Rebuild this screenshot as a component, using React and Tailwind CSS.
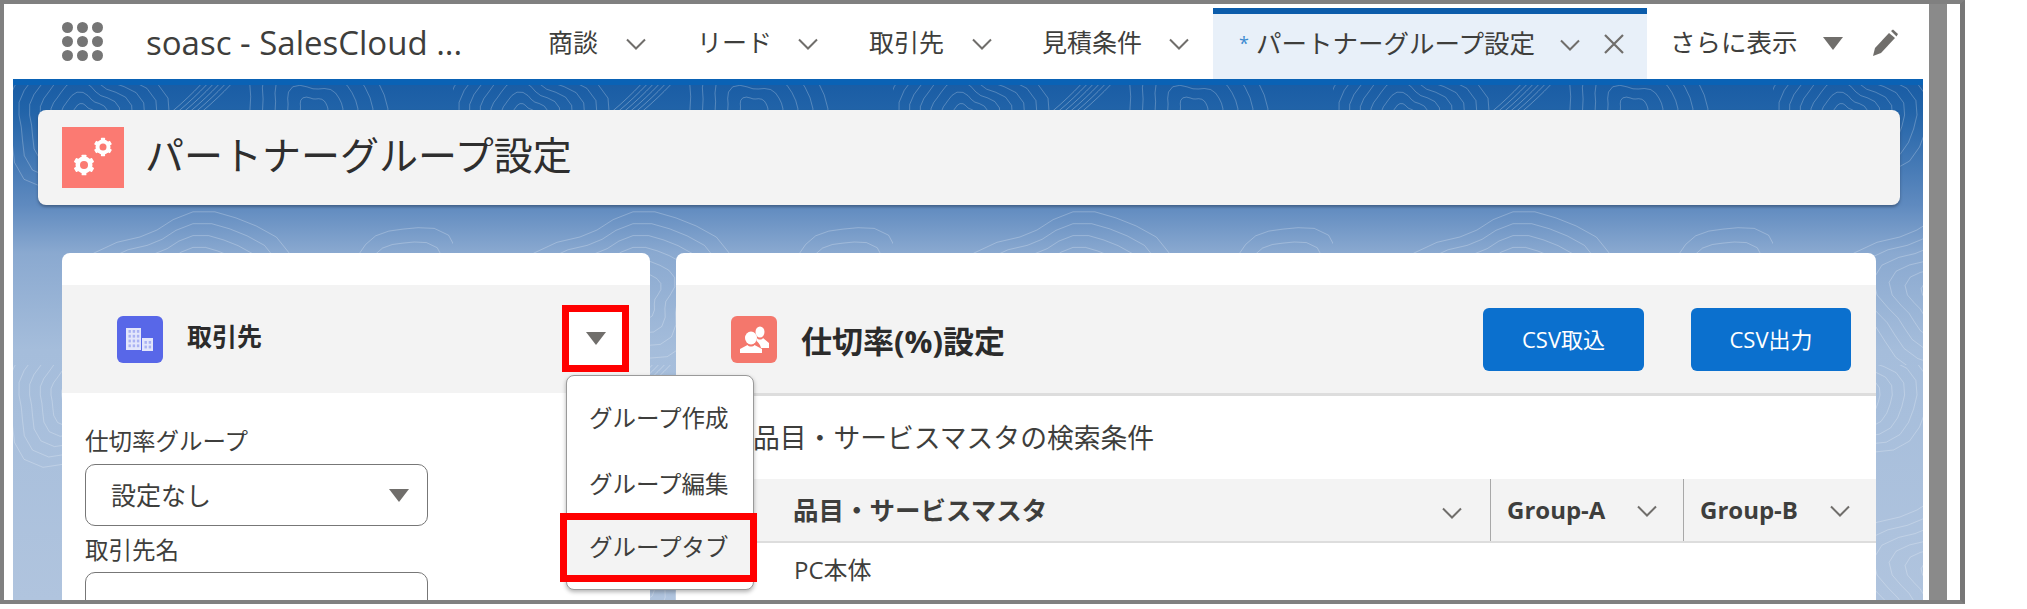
import { Fragment } from 'react'

// 共通アイコン
function Chevron({ className = '' }) {
  return (
    <svg width="22" height="14" viewBox="0 0 22 14" className={`shrink-0 ${className}`}>
      <path d="M2 2.5 L11 11.5 L20 2.5" fill="none" stroke="#706e6b" strokeWidth="2" />
    </svg>
  )
}

function Caret({ className = '' }) {
  return (
    <svg width="20" height="13" viewBox="0 0 20 13" className={`shrink-0 ${className}`}>
      <path d="M0 0 H20 L10 13 Z" fill="#706e6b" />
    </svg>
  )
}

function GridDots() {
  const dots = [0, 1, 2, 3, 4, 5, 6, 7, 8]
  return (
    <div className="grid grid-cols-3 gap-x-[4px] gap-y-[3px] w-[41px] shrink-0">
      {dots.map(d => <span key={d} className="w-[11px] h-[11px] rounded-full bg-[#757575]" />)}
    </div>
  )
}

function Gear({ x, y, r, hole }) {
  return (
    <g transform={`translate(${x} ${y})`}>
      {[0, 60, 120, 180, 240, 300].map(a => (
        <rect key={a} x={-r * 0.28} y={-r * 1.22} width={r * 0.56} height={r * 0.6} rx="0.6" fill="#fff" transform={`rotate(${a})`} />
      ))}
      <circle r={r} fill="#fff" />
      <circle r={hole} fill="#fb7a72" />
    </g>
  )
}

function GearsIcon() {
  return (
    <div className="w-[62px] h-[61px] bg-[#fb7a72] shrink-0 flex items-center justify-center">
      <svg width="62" height="61" viewBox="0 0 62 61">
        <Gear x={22} y={38} r={8.5} hole={4} />
        <Gear x={41} y={20} r={7.5} hole={3.5} />
      </svg>
    </div>
  )
}

function BuildingIcon() {
  const big = []
  for (let c = 0; c < 3; c++) for (let r = 0; r < 4; r++) big.push([11.5 + c * 4.2, 14 + r * 4.8])
  const small = []
  for (let c = 0; c < 2; c++) for (let r = 0; r < 2; r++) small.push([27.5 + c * 4.2, 25 + r * 4.6])
  return (
    <div className="w-[46px] h-[47px] rounded-[6px] bg-[#5867e8] shrink-0">
      <svg width="46" height="47" viewBox="0 0 46 47">
        <path d="M9 12 H24 V34 H9 Z M25 22 H36 V35 H25 Z" fill="#e3e6fb" />
        {big.map(([x, y]) => <rect key={`${x}-${y}`} x={x} y={y} width="2.4" height="2.8" fill="#aab2f3" />)}
        {small.map(([x, y]) => <rect key={`${x}-${y}`} x={x} y={y} width="2.4" height="2.8" fill="#aab2f3" />)}
      </svg>
    </div>
  )
}

function PeopleIcon() {
  return (
    <div className="w-[46px] h-[47px] rounded-[6px] bg-[#f4776c] shrink-0">
      <svg width="46" height="47" viewBox="0 0 46 47" fill="#fff">
        <ellipse cx="29" cy="16" rx="4.5" ry="5.5" />
        <path d="M26 22 C27 24 31 24 32 22 L38 27 V32 H30 C29 28 27 26 25.5 25 Z" />
        <ellipse cx="20" cy="22" rx="6" ry="6.5" />
        <path d="M16.5 29 C18 31 22 31 23.5 29 L31 33 V37 H9 V33 Z" />
      </svg>
    </div>
  )
}

// 背景の等高線
function blob(cx, cy, r, seed) {
  const pts = []
  for (let i = 0; i <= 28; i++) {
    const a = (i / 28) * Math.PI * 2
    const w = r * (1 + 0.12 * Math.sin(a * 3 + seed) + 0.07 * Math.cos(a * 5 + seed * 2))
    pts.push(`${(cx + Math.cos(a) * w * 1.15).toFixed(1)} ${(cy + Math.sin(a) * w).toFixed(1)}`)
  }
  return `M${pts.join(' L')}Z`
}

const CONTOURS = [
  [70, 30, [10, 20, 30, 40, 50, 60, 70], 1],
  [300, 24, [12, 24, 36, 48, 60], 2.4],
  [180, 210, [12, 24, 36, 48, 60, 72, 84], 4],
  [390, 200, [14, 28, 42, 56], 5.2],
]

function Topo() {
  return (
    <svg className="absolute inset-0 w-full h-full" aria-hidden="true">
      <defs>
        <pattern id="topo" width="440" height="280" patternUnits="userSpaceOnUse">
          {CONTOURS.map(([x, y, rs, s]) => rs.map(r => (
            <path key={`${x}-${r}`} d={blob(x, y, r, s)} fill="none" stroke="#ffffff" strokeOpacity="0.24" strokeWidth="1" />
          )))}
          {[0, 6, 12, 18, 24, 30].map(d => (
            <path key={d} d={`M${150 + d} 34 C${175 + d} 14 ${190 + d} -2 ${205 + d} -20`} fill="none" stroke="#ffffff" strokeOpacity="0.28" />
          ))}
        </pattern>
      </defs>
      <rect width="100%" height="100%" fill="url(#topo)" />
    </svg>
  )
}

const TABS = [
  { label: '商談', gap: 'ml-[84px]', chevGap: 'ml-[27px]' },
  { label: 'リード', gap: 'ml-[50px]', chevGap: 'ml-[25px]' },
  { label: '取引先', gap: 'ml-[50px]', chevGap: 'ml-[27px]' },
  { label: '見積条件', gap: 'ml-[49px]', chevGap: 'ml-[26px]' },
]

function NavBar() {
  return (
    <div className="h-[75px] flex items-center bg-white text-[25px] leading-[36px] text-[#3e3e3c]">
      <div className="ml-[49px]"><GridDots /></div>
      <div className="ml-[43px] mt-[3px] w-[318px] text-[33px] whitespace-nowrap text-[#3e3e3c]">soasc - SalesCloud ...</div>
      {TABS.map(t => (
        <Fragment key={t.label}>
          <span className={`${t.gap} whitespace-nowrap`}>{t.label}</span>
          <Chevron className={`${t.chevGap} mt-[4px]`} />
        </Fragment>
      ))}
      <div className="ml-[23px] w-[434px] h-[71px] self-end flex items-center bg-[#e8f0f9] border-t-[6px] border-[#0b5cab] pl-[26px] pb-[8px] text-[25.5px]">
        <span className="text-[#3b8ad0] text-[18px] w-[17px]">*</span>
        <span className="whitespace-nowrap">パートナーグループ設定</span>
        <Chevron className="ml-[24px] mt-[4px]" />
        <svg width="22" height="22" viewBox="0 0 22 22" className="ml-[22px] mt-[3px] shrink-0">
          <path d="M2 2 L20 20 M20 2 L2 20" stroke="#706e6b" strokeWidth="2.2" />
        </svg>
      </div>
      <span className="ml-[23px] whitespace-nowrap text-[25.5px]">さらに表示</span>
      <Caret className="ml-[25px] mt-[3px]" />
      <svg width="26" height="28" viewBox="0 0 26 28" className="ml-[29px] mt-[3px] shrink-0">
        <path d="M1 27 L3 19 L17 4 L23 9 L9 24 Z" fill="#706e6b" />
        <path d="M19 2 L21 0.5 L26 5 L24.5 7.5 Z" fill="#706e6b" />
      </svg>
    </div>
  )
}

function PageHeader() {
  return (
    <div className="relative ml-[25px] mr-[23px] mt-[25px] h-[95px] rounded-[8px] bg-[#f3f3f3] shadow-[0_2px_3px_rgba(40,60,90,0.55)] flex items-center pl-[24px]">
      <GearsIcon />
      <h1 className="ml-[21px] mb-[5px] text-[39px] leading-[50px] text-[#2e2e2e]">パートナーグループ設定</h1>
    </div>
  )
}

function LeftCard() {
  return (
    <div className="w-[588px] rounded-t-[8px] bg-white">
      <div className="h-[32px]" />
      <div className="h-[108px] bg-[#f3f3f3] flex items-center pl-[55px]">
        <BuildingIcon />
        <span className="ml-[24px] mb-[6px] text-[25px] leading-[32px] font-bold text-[#2b2b2b]">取引先</span>
      </div>
      <div className="pl-[23px] pt-[33px] text-[23.5px] leading-[30px] text-[#3e3e3c]">
        <div>仕切率グループ</div>
        <div className="mt-[8px] w-[343px] h-[62px] rounded-[10px] border border-[#777777] flex items-center justify-between pl-[25px] pr-[18px]">
          <span className="text-[25px]">設定なし</span>
          <Caret />
        </div>
        <div className="mt-[9px]">取引先名</div>
        <div className="mt-[7px] w-[343px] h-[62px] rounded-[10px] border border-[#777777]" />
      </div>
    </div>
  )
}

function RightCard() {
  return (
    <div className="w-[1200px] rounded-t-[8px] bg-white">
      <div className="h-[32px]" />
      <div className="h-[111px] bg-[#f3f3f3] border-b-[3px] border-[#dddddd] flex items-center pl-[55px] pr-[25px]">
        <PeopleIcon />
        <span className="ml-[24px] mt-[3px] text-[31px] leading-[40px] font-bold text-[#2b2b2b]">仕切率(%)設定</span>
        <button className="ml-auto w-[161px] h-[63px] rounded-[6px] bg-[#0b70ce] text-white text-[22px]">CSV取込</button>
        <button className="ml-[47px] w-[160px] h-[63px] rounded-[6px] bg-[#0b70ce] text-white text-[22px]">CSV出力</button>
      </div>
      <div className="pl-[77px] pt-[24px] text-[26.8px] leading-[36px] text-[#3e3e3c] whitespace-nowrap">品目・サービスマスタの検索条件</div>
      <div className="mt-[23px] h-[64px] bg-[#f3f3f3] border-b-2 border-[#dddddd] flex items-center text-[#3e3e3c] font-bold">
        <div className="w-[814px] flex items-center justify-between pl-[117px] pr-[27px] text-[25.5px]">
          <span>品目・サービスマスタ</span>
          <Chevron className="mt-[6px]" />
        </div>
        <div className="w-[193px] h-full border-l border-[#a8a8a8] flex items-center pl-[16px] text-[24px]">
          <span className="w-[129px]">Group-A</span>
          <Chevron className="mt-[2px]" />
        </div>
        <div className="w-[193px] h-full border-l border-[#a8a8a8] flex items-center pl-[16px] text-[24px]">
          <span className="w-[129px]">Group-B</span>
          <Chevron className="mt-[2px]" />
        </div>
      </div>
      <div className="pl-[118px] pt-[12px] text-[24px] leading-[30px] text-[#3e3e3c]">PC本体</div>
    </div>
  )
}

function GroupMenu() {
  return (
    <div className="absolute left-[566px] top-[375px] w-[188px] h-[215px] rounded-[8px] bg-white border border-[#9a9a9a] shadow-[0_2px_4px_rgba(0,0,0,0.3)] pt-[10px] text-[23.5px] text-[#3e3e3c]">
      <div className="h-[66px] flex items-center pl-[22px] whitespace-nowrap">グループ作成</div>
      <div className="h-[66px] flex items-center pl-[22px] whitespace-nowrap">グループ編集</div>
      <div className="relative h-[62px] -mt-[1px] bg-[#f3f3f3] flex items-center pl-[22px] whitespace-nowrap">
        グループタブ
        <div className="absolute left-[-7px] top-[-4px] w-[197px] h-[69px] border-[7px] border-[#ff0000]" />
      </div>
    </div>
  )
}

export default function App() {
  return (
    <div className="relative w-[2027px] h-[609px] bg-white overflow-hidden font-['Open_Sans','Noto_Sans_CJK_JP',sans-serif]">
      <div className="w-[1965px] h-[604px] border-y-4 border-l-4 border-[#808080] border-r-[5px] border-r-[#777777] flex">
        <div className="ml-[9px] w-[1910px] flex flex-col">
          <NavBar />
          <div className="relative flex-1 overflow-hidden border-t-[6px] border-[#0a62b5] bg-[linear-gradient(180deg,#1a5da5_0px,#2163a8_25px,#5f8abf_120px,#8aa9d0_168px,#a5bddb_265px,#b0c4de_515px)]">
            <Topo />
            <PageHeader />
            <div className="relative mt-[48px] ml-[49px] flex gap-[26px]">
              <LeftCard />
              <RightCard />
            </div>
          </div>
        </div>
        <div className="ml-[6px] w-[18px] bg-[#8a8a8a]" />
      </div>
      <div className="absolute left-[562px] top-[305px] w-[67px] h-[67px] border-[7px] border-[#ff0000] bg-white flex items-center justify-center">
        <Caret />
      </div>
      <GroupMenu />
    </div>
  )
}
